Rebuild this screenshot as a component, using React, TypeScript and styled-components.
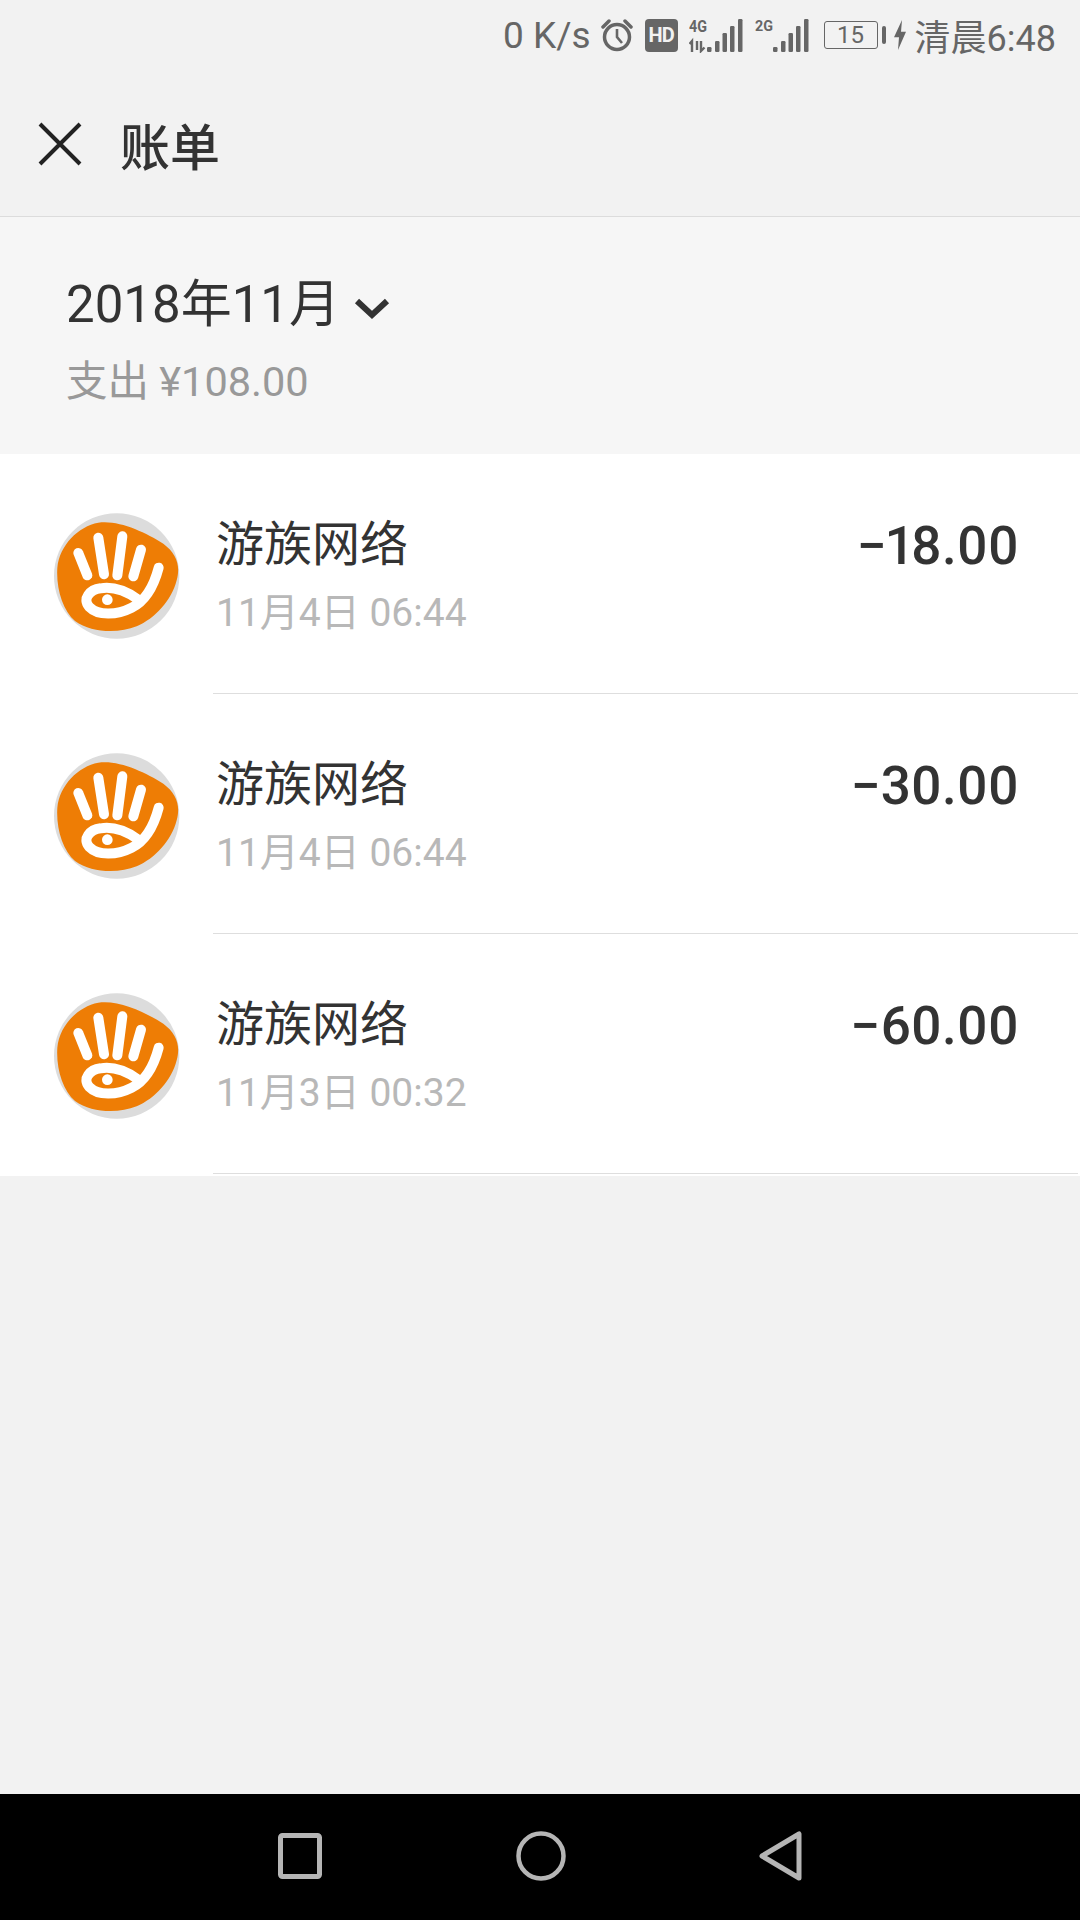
import React from 'react'
import styled, { createGlobalStyle } from 'styled-components'

const BILLS = [
  { id: 1, date: '11月4日 06:44', amount: '−18.00' },
  { id: 2, date: '11月4日 06:44', amount: '−30.00' },
  { id: 3, date: '11月3日 00:32', amount: '−60.00' },
]

function AlarmIcon() {
  return (
    <svg width='32' height='34' viewBox='0 0 32 34'>
      <circle cx='16' cy='19' r='12.5' fill='none' stroke='#666' strokeWidth='3.5' />
      <path d='M16 11v8l5 6' fill='none' stroke='#666' strokeWidth='2.6' />
      <path d='M2 9l6-6M30 9l-6-6' stroke='#666' strokeWidth='3.5' strokeLinecap='round' />
    </svg>
  )
}

function SignalIcon({ label, data }: { label: string; data?: boolean }) {
  const bars = [
    { x: 18, h: 5 },
    { x: 26, h: 11 },
    { x: 33.5, h: 19 },
    { x: 41, h: 26 },
    { x: 49, h: 33 },
  ]
  return (
    <svg width='54' height='36' viewBox='0 0 54 36'>
      <text
        x='0'
        y={data ? 15 : 14}
        fontFamily='Roboto, sans-serif'
        fontWeight='700'
        fontSize={data ? 17 : 15}
        textLength='18'
        lengthAdjust='spacingAndGlyphs'
        fill='#666'
      >
        {label}
      </text>
      {data && (
        <path d='M3 35V24l-2.500 3M8 24v9M12 24v10l3.500-3.500' fill='none' stroke='#666' strokeWidth='2.400' />
      )}
      {bars.map((bar) => (
        <rect key={bar.x} x={bar.x} y={35 - bar.h} width='4.500' height={bar.h} rx='1.200' fill='#666' />
      ))}
    </svg>
  )
}

function BoltIcon() {
  return (
    <svg width='12' height='30' viewBox='0 0 12 28' preserveAspectRatio='none'>
      <path d='M8 0L0 16h5l-1 12 8-17H7z' fill='#666' />
    </svg>
  )
}

function CloseIcon() {
  return (
    <svg width='44' height='44' viewBox='0 0 44 44'>
      <path d='M2 2l40 40M42 2L2 42' stroke='#222' strokeWidth='4' />
    </svg>
  )
}

function ChevronIcon() {
  return (
    <svg width='36' height='24' viewBox='0 0 36 24'>
      <path d='M3 5l15 14L33 5' fill='none' stroke='#333' strokeWidth='6' />
    </svg>
  )
}

function GameLogo() {
  return (
    <svg width='126' height='126' viewBox='72 68 378 378'>
      <circle cx='260' cy='257' r='188' fill='#dcdcdc' />
      <path
        d='M82 232C88 165 145 108 205 97C265 88 345 125 400 160C440 190 452 225 440 270C425 330 375 385 320 408C265 430 185 428 135 392C98 360 78 295 82 232Z'
        fill='#ee7d05'
      />
      <g fill='none' stroke='#fff' strokeWidth='30' strokeLinecap='round'>
        <path d='M145 188L172 255' />
        <path d='M205 142L222 252' />
        <path d='M277 138L262 255' />
        <path d='M333 178L310 258' />
        <path d='M386 232C372 285 350 330 305 352C262 374 205 378 178 350C155 325 180 298 212 294C250 288 285 300 322 326' />
      </g>
      <circle cx='232' cy='328' r='16' fill='#fff' />
    </svg>
  )
}

function App() {
  return (
    <React.Fragment>
      <GlobalStyle />
      <Page>
        <StatusBar>
          <Speed>0 K/s</Speed>
          <AlarmIcon />
          <HdBadge>HD</HdBadge>
          <SignalIcon label='4G' data />
          <SignalGap />
          <SignalIcon label='2G' />
          <Battery>15</Battery>
          <BatteryNub />
          <BoltIcon />
          <Clock>清晨6:48</Clock>
        </StatusBar>
        <Header>
          <CloseIcon />
          <Title>账单</Title>
        </Header>
        <Summary>
          <Month>
            2018年11月
            <ChevronIcon />
          </Month>
          <Spent>支出 ¥108.00</Spent>
        </Summary>
        <BillList>
          {BILLS.map((bill) => (
            <BillRow key={bill.id}>
              <AvatarSlot>
                <GameLogo />
              </AvatarSlot>
              <BillBody>
                <BillInfo>
                  <BillName>游族网络</BillName>
                  <BillDate>{bill.date}</BillDate>
                </BillInfo>
                <BillAmount>{bill.amount}</BillAmount>
              </BillBody>
            </BillRow>
          ))}
        </BillList>
        <Spacer />
        <NavBar>
          <svg width='44' height='46' viewBox='0 0 44 46'>
            <rect x='2.500' y='2.500' width='39' height='41' rx='2' fill='none' stroke='#b5b5b5' strokeWidth='5' />
          </svg>
          <svg width='50' height='50' viewBox='0 0 50 50'>
            <circle cx='25' cy='25' r='22.500' fill='none' stroke='#b5b5b5' strokeWidth='4.500' />
          </svg>
          <svg width='44' height='50' viewBox='0 0 44 50'>
            <path d='M40 3v44L3 25z' fill='none' stroke='#b5b5b5' strokeWidth='5' strokeLinejoin='round' />
          </svg>
        </NavBar>
      </Page>
    </React.Fragment>
  )
}

const GlobalStyle = createGlobalStyle`
  html, body {
    margin: 0;
    padding: 0;
    background: #f2f2f2;
  }
  body {
    font-family: Roboto, "Noto Sans CJK SC", sans-serif;
  }
`

const Page = styled.div`
  width: 1080px;
  height: 1920px;
  display: flex;
  flex-direction: column;
  background: #f2f2f2;
  overflow: hidden;
`

const StatusBar = styled.div`
  height: 70px;
  display: flex;
  align-items: center;
  justify-content: flex-end;
  padding-right: 24px;
  color: #666;
  box-sizing: border-box;
`

const Speed = styled.span`
  font-size: 37px;
  margin-right: 10px;
`

const HdBadge = styled.span`
  width: 33px;
  height: 33px;
  margin: 0 11px 0 12px;
  border-radius: 4px;
  background: #666;
  color: #f2f2f2;
  font-size: 20px;
  font-weight: 700;
  line-height: 33px;
  text-align: center;
  letter-spacing: -1px;
`

const SignalGap = styled.span`
  width: 12px;
`

const Battery = styled.span`
  width: 54px;
  height: 28px;
  margin-left: 15px;
  border: 1.5px solid #666;
  border-radius: 3px;
  box-sizing: border-box;
  font-size: 24px;
  line-height: 26px;
  text-align: center;
`

const BatteryNub = styled.span`
  width: 4px;
  height: 18px;
  margin: 0 8px 0 4px;
  border-radius: 2px;
  background: #666;
`

const Clock = styled.span`
  font-size: 36px;
  margin-left: 9px;
`

const Header = styled.div`
  height: 147px;
  display: flex;
  align-items: center;
  padding: 2px 0 0 38px;
  box-sizing: border-box;
  gap: 38px;
  border-bottom: 1.5px solid #dcdcdc;
`

const Title = styled.h1`
  margin: 0;
  font-size: 50px;
  font-weight: 500;
  color: #333;
`

const Summary = styled.div`
  height: 237px;
  padding: 58px 0 0 66px;
  box-sizing: border-box;
  background: #f6f6f6;
`

const Month = styled.div`
  display: flex;
  align-items: center;
  gap: 14px;
  font-size: 51px;
  line-height: 60px;
  color: #333;

  svg {
    margin-top: 6px;
  }
`

const Spent = styled.div`
  margin-top: 22px;
  font-size: 41.5px;
  line-height: 50px;
  color: #999;
`

const BillList = styled.div`
  background: #fff;
  padding-bottom: 2px;
`

const BillRow = styled.div`
  height: 240px;
  display: flex;
`

const AvatarSlot = styled.div`
  width: 213px;
  flex: none;
  padding: 59px 0 0 54px;
  box-sizing: border-box;
`

const BillBody = styled.div`
  flex: 1;
  display: flex;
  justify-content: space-between;
  margin-right: 2px;
  padding: 0 59px 0 3px;
  border-bottom: 1.5px solid #dedede;
`

const BillInfo = styled.div`
  padding-top: 61px;
`

const BillName = styled.div`
  font-size: 48px;
  line-height: 60px;
  color: #333;
`

const BillDate = styled.div`
  margin-top: 14px;
  font-size: 39px;
  line-height: 48px;
  color: #b8b8b8;
`

const BillAmount = styled.div`
  padding-top: 62px;
  font-size: 53px;
  line-height: 60px;
  font-weight: 500;
  font-variant-numeric: proportional-nums;
  color: #333;
`

const Spacer = styled.div`
  flex: 1;
`

const NavBar = styled.div`
  height: 126px;
  flex: none;
  display: flex;
  align-items: center;
  justify-content: space-between;
  padding: 0 277px 2px 278px;
  box-sizing: border-box;
  background: #000;
`

export default App
